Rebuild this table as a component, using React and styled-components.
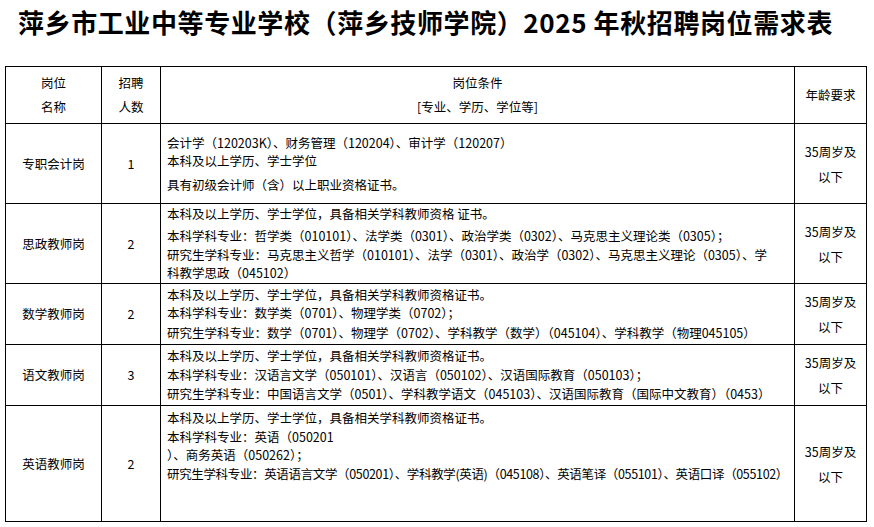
import styled, { createGlobalStyle } from 'styled-components'

const GlobalStyle = createGlobalStyle`
  html, body {
    margin: 0;
    padding: 0;
    background: #fff;
  }
  body {
    font-family: "Noto Sans CJK SC", "Noto Sans", sans-serif;
    color: #000;
  }
`

const Page = styled.div`
  width: 874px;
  height: 527px;
  box-sizing: border-box;
  padding: 0 8px 0 5px;
  overflow: hidden;
`

const Title = styled.h1`
  margin: 0;
  padding: 5px 20px 0 0;
  height: 66px;
  box-sizing: border-box;
  text-align: center;
  font-size: 26px;
  line-height: 34px;
  font-weight: 700;
  letter-spacing: 0.6px;
  white-space: nowrap;
`

const Table = styled.table`
  width: 861px;
  border-collapse: collapse;
  table-layout: fixed;
  font-size: 12.5px;
`

const Row = styled.tr`
  height: ${(p) => p.h}px;
`

const Cell = styled.td`
  border: 1px solid #000;
  padding: 0;
  text-align: center;
  vertical-align: middle;
  line-height: ${(p) => p.lh || 18}px;
`

const CondCell = styled.td`
  border: 1px solid #000;
  padding: ${(p) => (p.top ? '3px 0 0 6px' : '0 0 0 6px')};
  text-align: left;
  vertical-align: ${(p) => (p.top ? 'top' : 'middle')};
`

const Line = styled.div`
  line-height: 18px;
  white-space: nowrap;
  margin-top: ${(p) => p.gap || 0}px;
  letter-spacing: ${(p) => (p.tight ? '-0.35px' : '0')};
`

const rows = [
  {
    name: '专职会计岗',
    count: '1',
    h: 80,
    lines: [
      { t: '会计学（120203K）、财务管理（120204）、审计学（120207）' },
      { t: '本科及以上学历、学士学位' },
      { t: '具有初级会计师（含）以上职业资格证书。', gap: 6 },
    ],
  },
  {
    name: '思政教师岗',
    count: '2',
    h: 80,
    lines: [
      { t: '本科及以上学历、学士学位，具备相关学科教师资格 证书。' },
      { t: '本科学科专业：哲学类（010101）、法学类（0301）、政治学类（0302）、马克思主义理论类（0305）；', gap: 4 },
      { t: '研究生学科专业：马克思主义哲学（010101）、法学（0301）、政治学（0302）、马克思主义理论（0305）、学', gap: 1 },
      { t: '科教学思政（045102）' },
    ],
  },
  {
    name: '数学教师岗',
    count: '2',
    h: 61,
    lines: [
      { t: '本科及以上学历、学士学位，具备相关学科教师资格证书。' },
      { t: '本科学科专业：数学类（0701）、物理学类（0702）；' },
      { t: '研究生学科专业：数学（0701）、物理学（0702）、学科教学（数学）（045104）、学科教学（物理045105）', gap: 2 },
    ],
  },
  {
    name: '语文教师岗',
    count: '3',
    h: 61,
    lines: [
      { t: '本科及以上学历、学士学位，具备相关学科教师资格证书。' },
      { t: '本科学科专业：汉语言文学（050101）、汉语言（050102）、汉语国际教育（050103）；', gap: 1 },
      { t: '研究生学科专业：中国语言文学（0501）、学科教学语文（045103）、汉语国际教育（国际中文教育）（0453）', gap: 1 },
    ],
  },
  {
    name: '英语教师岗',
    count: '2',
    h: 116,
    top: true,
    lines: [
      { t: '本科及以上学历、学士学位，具备相关学科教师资格证书。' },
      { t: '本科学科专业：英语（050201', gap: 1 },
      { t: '）、商务英语（050262）；' },
      { t: '研究生学科专业：英语语言文学（050201）、学科教学(英语)（045108）、英语笔译（055101）、英语口译（055102）', gap: 1, tight: true },
    ],
  },
]

export default function App() {
  return (
    <>
      <GlobalStyle />
      <Page>
        <Title>萍乡市工业中等专业学校（萍乡技师学院）2025 年秋招聘岗位需求表</Title>
        <Table>
          <colgroup>
            <col style={{ width: 96 }} />
            <col style={{ width: 59 }} />
            <col style={{ width: 634 }} />
            <col style={{ width: 72 }} />
          </colgroup>
          <tbody>
            <Row h={57}>
              <Cell lh={24}>
                岗位
                <br />
                名称
              </Cell>
              <Cell lh={24}>
                招聘
                <br />
                人数
              </Cell>
              <Cell lh={24}>
                岗位条件
                <br />
                [专业、学历、学位等]
              </Cell>
              <Cell>年龄要求</Cell>
            </Row>
            {rows.map((r) => (
              <Row key={r.name} h={r.h}>
                <Cell>{r.name}</Cell>
                <Cell>{r.count}</Cell>
                <CondCell top={r.top}>
                  {r.lines.map((l, i) => (
                    <Line key={i} gap={l.gap} tight={l.tight}>
                      {l.t}
                    </Line>
                  ))}
                </CondCell>
                <Cell lh={25}>
                  35周岁及
                  <br />
                  以下
                </Cell>
              </Row>
            ))}
          </tbody>
        </Table>
      </Page>
    </>
  )
}
